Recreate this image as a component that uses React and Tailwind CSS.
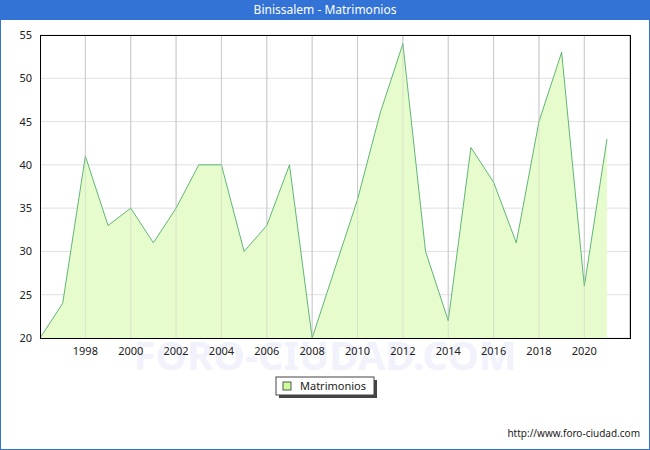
export default function App() {
  const data = [20,24,41,33,35,31,35,40,40,30,33,40,20,28,36,46,54,30,22,42,38,31,45,53,26,43];
  const X = (i) => 40 + i * 22.68;
  const Y = (v) => 338 - (v - 20) * (303 / 35);
  const line = data.map((v, i) => `${X(i)},${Y(v)}`).join(" ");
  const area = `${X(0)},338 ${line} ${X(data.length - 1)},338`;
  const yt = [20,25,30,35,40,45,50,55];
  return (
    <div className="w-[650px] h-[450px] bg-[#3373d6] flex flex-col px-px pb-px font-['DejaVu_Sans',sans-serif]">
      <div className="h-[20px] flex items-center justify-center text-white text-[12px]">Binissalem - Matrimonios</div>
      <div className="flex-1 bg-white">
        <svg width="648" height="429" viewBox="1 20 648 429" className="font-['DejaVu_Sans',sans-serif]">
          <text x="325" y="370" textAnchor="middle" fontSize="40" fill="#f1f2fb" fontWeight="bold">FORO-CIUDAD.COM</text>
          {yt.map((v) => (
            <g key={v}>
              <line x1="40" x2="630" y1={Y(v)} y2={Y(v)} stroke="#e0e0e0" />
              <text x="32" y={Y(v) + 4} textAnchor="end" fontSize="11" fill="#222">{v}</text>
            </g>
          ))}
          {Array.from({ length: 13 }, (_, k) => (
            <g key={k}>
              <line x1={X(2 + 2 * k)} x2={X(2 + 2 * k)} y1="35" y2="338" stroke="#cccccc" />
              {k < 12 && <text x={X(2 + 2 * k)} y="355" textAnchor="middle" fontSize="11" fill="#222">{1998 + 2 * k}</text>}
            </g>
          ))}
          <polygon points={area} fill="#e6fccc" />
          <polyline points={line} fill="none" stroke="#3aa35a" strokeWidth="0.8" />
          {Array.from({ length: 13 }, (_, k) => (
            <line key={k} x1={X(2 + 2 * k)} x2={X(2 + 2 * k)} y1="35" y2="338" stroke="#cccccc" strokeOpacity="0.5" />
          ))}
          <rect x="40.5" y="35.5" width="590" height="303" fill="none" stroke="#000" />
          <rect x="279" y="380" width="98" height="18" fill="#444" />
          <rect x="276" y="377" width="98" height="18" fill="#fff" stroke="#444" />
          <rect x="283" y="382" width="8" height="8" fill="#ccff99" stroke="#555" />
          <text x="300" y="390" fontSize="11" fill="#222">Matrimonios</text>
          <text x="640" y="437" textAnchor="end" fontSize="10" fill="#222">http://www.foro-ciudad.com</text>
        </svg>
      </div>
    </div>
  );
}
